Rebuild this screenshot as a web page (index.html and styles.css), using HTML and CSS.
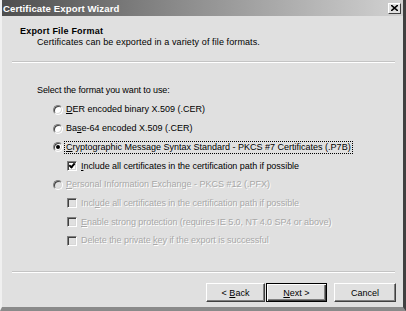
FILE: index.html
```html
<!DOCTYPE html>
<html lang="en">
<head>
  <meta charset="UTF-8">
  <title>Certificate Export Wizard</title>
  <link rel="stylesheet" href="styles.css">
</head>
<body>

  <div class="window">
    <div class="titlebar">
      <span class="title">Certificate Export Wizard</span>
      <span class="close">
        <svg width="7" height="6" viewBox="0 0 7 6"><path d="M0 0 L7 6 M7 0 L0 6" stroke="#000" stroke-width="1.6"/></svg>
      </span>
    </div>

    <div class="header">
      <h1>Export File Format</h1>
      <p>Certificates can be exported in a variety of file formats.</p>
    </div>
    <div class="etched"></div>

    <div class="content">
      <p class="prompt">Select the format you want to use:</p>
      <ul class="options">
        <li class="row"><span class="radio"></span><span class="label"><u>D</u>ER encoded binary X.509 (.CER)</span></li>
        <li class="row"><span class="radio"></span><span class="label">Ba<u>s</u>e-64 encoded X.509 (.CER)</span></li>
        <li class="row"><span class="radio checked"></span><span class="label focus"><u>C</u>ryptographic Message Syntax Standard - PKCS #7 Certificates (.P7B)</span></li>
        <li class="row sub"><span class="check checked"></span><span class="label"><u>I</u>nclude all certificates in the certification path if possible</span></li>
        <li class="row disabled"><span class="radio"></span><span class="label"><u>P</u>ersonal Information Exchange - PKCS #12 (.PFX)</span></li>
        <li class="row sub disabled"><span class="check"></span><span class="label">Incl<u>u</u>de all certificates in the certification path if possible</span></li>
        <li class="row sub disabled"><span class="check"></span><span class="label"><u>E</u>nable strong protection (requires IE 5.0, NT 4.0 SP4 or above)</span></li>
        <li class="row sub disabled"><span class="check"></span><span class="label">Delete the private <u>k</u>ey if the export is successful</span></li>
      </ul>
    </div>

    <div class="etched bottom"></div>
    <div class="buttons">
      <button class="btn back">&lt; <u>B</u>ack</button>
      <button class="btn default"><u>N</u>ext &gt;</button>
      <button class="btn cancel">Cancel</button>
    </div>
  </div>

</body>
</html>
```

FILE: styles.css
```css
* { box-sizing: border-box; }

body {
  margin: 0;
  background: #e0e0e0;
  font-family: "Liberation Sans", Arial, sans-serif;
  font-size: 9px;
  color: #000;
}

.window {
  width: 406px;
  height: 311px;
  background: #e0e0e0;
  border-left: 2px solid #f0f0f0;
  border-right: 3px solid #404040;
  border-bottom: 4px solid #8a8a8a;
  display: flex;
  flex-direction: column;
}

.titlebar {
  height: 16px;
  background: linear-gradient(to right, #4e4e4e, #8c8c8c 45%, #d2d2d2);
  display: flex;
  align-items: center;
  justify-content: space-between;
  padding: 0 2px 0 1px;
}
.title {
  color: #fff;
  font-weight: bold;
  font-size: 9.6px;
  letter-spacing: 0.1px;
}
.close {
  width: 13px;
  height: 11px;
  background: #e0e0e0;
  border: 1px solid;
  border-color: #fff #404040 #404040 #fff;
  display: flex;
  align-items: center;
  justify-content: center;
}

.header { padding: 10px 0 0 18px; line-height: 11px; }
.header h1 { margin: 0; font-size: 9px; font-weight: bold; letter-spacing: 0.2px; }
.header p { margin: 0 0 0 17px; letter-spacing: 0.1px; }

.etched {
  margin: 13px 8px 0 10px;
  height: 2px;
  border-top: 1px solid #c4c4c4;
  border-bottom: 1px solid #fff;
}
.etched.bottom { margin-top: 21px; }

.content { padding: 22px 0 0 35px; }
.prompt { margin: 0; line-height: 11px; letter-spacing: -0.1px; }

.options { list-style: none; margin: 4.6px 0 0; padding: 0 0 0 16px; }
.row {
  height: 18.7px;
  display: flex;
  align-items: center;
  gap: 2px;
}
.row.sub { padding-left: 14px; gap: 3px; }
.row.sub .label { letter-spacing: -0.05px; }

.radio {
  width: 10px;
  height: 10px;
  border-radius: 50%;
  background: #fff;
  border: 1px solid;
  border-color: #808080 #fff #fff #808080;
  box-shadow: inset 1px 1px 0 #404040, inset -1px -1px 0 #d8d8d8;
  display: flex;
  align-items: center;
  justify-content: center;
}
.radio.checked::after {
  content: "";
  width: 4px;
  height: 4px;
  border-radius: 50%;
  background: #000;
}

.check {
  width: 10px;
  height: 10px;
  background: #fff;
  border: 1px solid;
  border-color: #808080 #fff #fff #808080;
  box-shadow: inset 1px 1px 0 #404040, inset -1px -1px 0 #d8d8d8;
  position: relative;
}
.check.checked::after {
  content: "";
  position: absolute;
  left: 2px;
  top: 0px;
  width: 2px;
  height: 4px;
  border: solid #000;
  border-width: 0 2px 2px 0;
  transform: rotate(40deg);
}

.label { line-height: 11px; padding: 0 1px; }
.label.focus { outline: 1px dotted #000; outline-offset: 0; }

.disabled .label { color: #a8a8a8; text-shadow: 1px 1px 0 #fff; }
.disabled .radio,
.disabled .check { background: #e0e0e0; }

.buttons {
  display: flex;
  justify-content: flex-end;
  padding: 10px 7px 0 0;
}
.btn {
  height: 19px;
  font: inherit;
  color: #000;
  background: #e0e0e0;
  border: 1px solid;
  border-color: #fff #404040 #404040 #fff;
  box-shadow: inset -1px -1px 0 #808080;
  padding: 0;
}
.btn.back { width: 59px; }
.btn.default {
  width: 61px;
  margin-left: 1px;
  border-color: #000;
  box-shadow: inset 1px 1px 0 #fff, inset -1px -1px 0 #404040, inset -2px -2px 0 #808080;
}
.btn.cancel { width: 62px; margin-left: 7px; }
```
